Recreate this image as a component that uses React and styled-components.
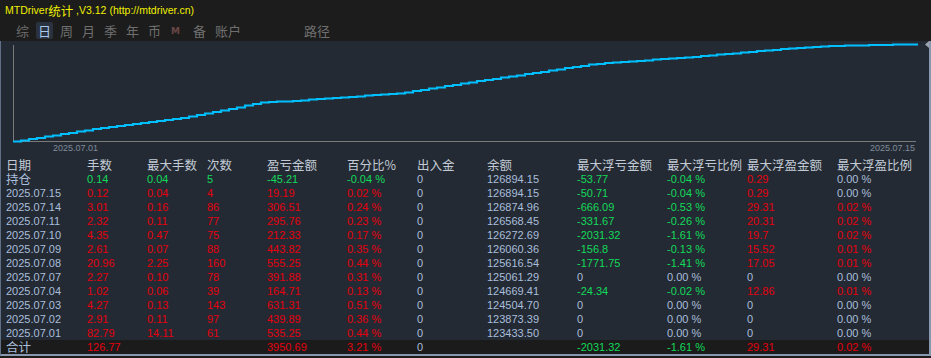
import React from 'react'
import styled, { createGlobalStyle } from 'styled-components'

const GlobalStyle = createGlobalStyle`
  html, body {
    margin: 0;
    padding: 0;
    background: #1c1c1c;
  }
  body {
    font-family: "Liberation Sans", Arial, "Noto Sans CJK SC", sans-serif;
  }
`

const LIGHT = '#a9bedb'
const GREEN = '#12d95a'
const RED = '#e5000f'

const Window = styled.div`
  width: 931px;
  height: 358px;
  display: flex;
  flex-direction: column;
  background: #1c1c1c;
  overflow: hidden;
`

const TitleBar = styled.div`
  height: 20px;
  display: flex;
  align-items: center;
  padding-left: 5px;
  color: #f0f000;
  font-size: 10.5px;
  white-space: pre;
`

const TitleCjk = styled.span`
  font-family: "Noto Sans CJK SC", sans-serif;
  font-size: 12.5px;
`

const TabBar = styled.div`
  height: 21px;
  display: flex;
  align-items: center;
  padding-left: 14px;
`

const Tab = styled.div`
  height: 17px;
  display: flex;
  align-items: center;
  justify-content: center;
  padding: 0 2px;
  margin-right: ${p => p.$gap || 5}px;
  border-radius: 2px;
  font-family: "Noto Sans CJK SC", sans-serif;
  font-size: 13px;
  color: ${p => (p.$active ? '#a8c8ec' : '#6f6f6f')};
  background: ${p => (p.$active ? '#29323e' : 'transparent')};
`

const MarkTab = styled(Tab)`
  font-family: "DejaVu Sans", sans-serif;
  font-size: 9px;
  font-weight: bold;
  color: #6a4646;
  margin-left: 1px;
  margin-right: 9px;
`

const Body = styled.div`
  flex: 0 0 auto;
  background: #242a33;
  border-left: 1px solid #5f6f86;
  border-right: 2px solid #8797ae;
  border-bottom: 2px solid #8797ae;
  display: flex;
  flex-direction: column;
`

const Chart = styled.svg`
  display: block;
  width: 928px;
  height: 117px;
`

const Table = styled.div`
  display: grid;
  grid-template-columns: 80px 60px 60px 60px 80px 70px 70px 90px 90px 80px 90px 1fr;
  grid-auto-rows: 14px;
`

const Row = styled.div`
  display: contents;
`

const Cell = styled.div`
  padding-left: ${p => (p.$first ? 5 : 6)}px;
  line-height: 14px;
  font-size: ${p => (p.$cjk ? 12.5 : 11)}px;
  font-family: ${p => (p.$cjk ? '"Noto Sans CJK SC", sans-serif' : '"Liberation Sans", Arial, sans-serif')};
  color: ${p => p.$color || LIGHT};
  background: ${p => (p.$total ? '#1b1b1b' : 'transparent')};
  white-space: nowrap;
`

const headers = ['日期', '手数', '最大手数', '次数', '盈亏金额', '百分比%', '出入金', '余额', '最大浮亏金额', '最大浮亏比例', '最大浮盈金额', '最大浮盈比例']

const rows = [
  ['2025.07.15', '0.12', '0.04', '4', '19.19', '0.02 %', '0', '126894.15', '-50.71', '-0.04 %', '0.29', '0.00 %'],
  ['2025.07.14', '3.01', '0.16', '86', '306.51', '0.24 %', '0', '126874.96', '-666.09', '-0.53 %', '29.31', '0.02 %'],
  ['2025.07.11', '2.32', '0.11', '77', '295.76', '0.23 %', '0', '126568.45', '-331.67', '-0.26 %', '20.31', '0.02 %'],
  ['2025.07.10', '4.35', '0.47', '75', '212.33', '0.17 %', '0', '126272.69', '-2031.32', '-1.61 %', '19.7', '0.02 %'],
  ['2025.07.09', '2.61', '0.07', '88', '443.82', '0.35 %', '0', '126060.36', '-156.8', '-0.13 %', '15.52', '0.01 %'],
  ['2025.07.08', '20.96', '2.25', '160', '555.25', '0.44 %', '0', '125616.54', '-1771.75', '-1.41 %', '17.05', '0.01 %'],
  ['2025.07.07', '2.27', '0.10', '78', '391.88', '0.31 %', '0', '125061.29', '0', '0.00 %', '0', '0.00 %'],
  ['2025.07.04', '1.02', '0.06', '39', '164.71', '0.13 %', '0', '124669.41', '-24.34', '-0.02 %', '12.86', '0.01 %'],
  ['2025.07.03', '4.27', '0.13', '143', '631.31', '0.51 %', '0', '124504.70', '0', '0.00 %', '0', '0.00 %'],
  ['2025.07.02', '2.91', '0.11', '97', '439.89', '0.36 %', '0', '123873.39', '0', '0.00 %', '0', '0.00 %'],
  ['2025.07.01', '82.79', '14.11', '61', '535.25', '0.44 %', '0', '123433.50', '0', '0.00 %', '0', '0.00 %'],
]

const holding = ['持仓', '0.14', '0.04', '5', '-45.21', '-0.04 %', '0', '126894.15', '-53.77', '-0.04 %', '0.29', '0.00 %']
const total = ['合计', '126.77', '', '', '3950.69', '3.21 %', '0', '', '-2031.32', '-1.61 %', '29.31', '0.02 %']

const colorFor = (i, v, isHolding) => {
  if (i === 0 || i === 6 || i === 7) return LIGHT
  if (isHolding && i <= 5) return GREEN
  if (i >= 1 && i <= 5) return RED
  if (i === 8 || i === 9) return v.startsWith('-') ? GREEN : LIGHT
  if (i === 10 || i === 11) return parseFloat(v) > 0 ? RED : LIGHT
  return LIGHT
}

// equity curve, in chart coordinates
const keys = [
  [13, 100.5], [100, 87], [183, 76.7], [233, 67], [258, 61.7], [290, 60],
  [333, 57], [400, 52], [470, 41], [593, 23], [693, 15.7], [793, 7],
  [830, 5], [877, 4], [917, 3.3],
]

const interp = x => {
  for (let i = 1; i < keys.length; i++) {
    const [x0, y0] = keys[i - 1]
    const [x1, y1] = keys[i]
    if (x <= x1) return y0 + ((x - x0) / (x1 - x0)) * (y1 - y0)
  }
  return keys[keys.length - 1][1]
}

const stepPath = () => {
  let d = `M12 ${interp(13).toFixed(1)}`
  for (let x = 20; x <= 917; x += 8) {
    d += ` H${x} V${(Math.round(interp(x) * 2) / 2).toFixed(1)}`
  }
  return d + ' H917'
}

const renderChart = () => (
  <Chart viewBox="0 0 928 117">
    <line x1="12.5" y1="4" x2="12.5" y2="100.5" stroke="#7a7a7a" strokeWidth="1" />
    <line x1="12" y1="100.5" x2="915" y2="100.5" stroke="#7a7a7a" strokeWidth="1" />
    <path d={stepPath()} fill="none" stroke="#00bfff" strokeWidth="2.2" />
    <text x="52" y="110" fill="#7f8b9a" fontSize="9" fontFamily="Liberation Sans, Arial, sans-serif">2025.07.01</text>
    <text x="914" y="110" fill="#7f8b9a" fontSize="9" textAnchor="end" fontFamily="Liberation Sans, Arial, sans-serif">2025.07.15</text>
    <polygon points="928,0 928,7 924,3.5" fill="#9aa4b0" />
  </Chart>
)

const renderRow = (cells, opts = {}) => (
  <Row key={cells[0]}>
    {cells.map((v, i) => (
      <Cell
        key={i}
        $first={i === 0}
        $cjk={opts.cjkFirst && i === 0}
        $total={opts.total}
        $color={colorFor(i, v, opts.holding)}
      >
        {v}
      </Cell>
    ))}
  </Row>
)

export default function App() {
  return (
    <Window>
      <GlobalStyle />
      <TitleBar>MTDriver<TitleCjk>统计</TitleCjk> ,V3.12 (http://mtdriver.cn)</TitleBar>
      <TabBar>
        <Tab>综</Tab>
        <Tab $active>日</Tab>
        <Tab>周</Tab>
        <Tab>月</Tab>
        <Tab>季</Tab>
        <Tab>年</Tab>
        <Tab>币</Tab>
        <MarkTab>M</MarkTab>
        <Tab>备</Tab>
        <Tab $gap={59}>账户</Tab>
        <Tab>路径</Tab>
      </TabBar>
      <Body>
        {renderChart()}
        <Table>
          <Row>
            {headers.map((h, i) => (
              <Cell key={h} $first={i === 0} $cjk $color="#c2cad6">{h}</Cell>
            ))}
          </Row>
          {renderRow(holding, { holding: true, cjkFirst: true })}
          {rows.map(r => renderRow(r))}
          {renderRow(total, { total: true, cjkFirst: true })}
        </Table>
      </Body>
    </Window>
  )
}
